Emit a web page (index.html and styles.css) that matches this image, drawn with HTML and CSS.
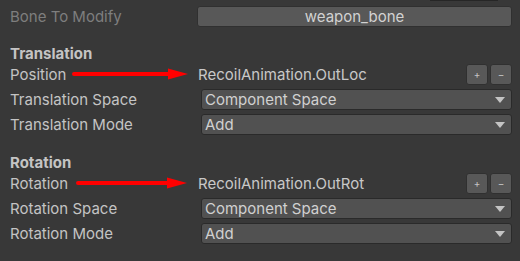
FILE: index.html
```html
<!DOCTYPE html>
<html>
<head>
<meta charset="utf-8">
<link rel="stylesheet" href="styles.css">
</head>
<body>
<div class="topnub"></div>
<div class="panel">
  <div class="row">
    <div class="label disabled">Bone To Modify</div>
    <div class="value"><div class="button-field">weapon_bone</div></div>
  </div>

  <div class="section">
    <div class="header">Translation</div>
    <div class="rows">
      <div class="row">
        <div class="label">Position
          <svg class="arrow arrow-pos" width="120" height="14" viewBox="0 0 120 14"><line x1="2" y1="7" x2="100" y2="7" stroke="#f00" stroke-width="4" stroke-linecap="round"/><polygon points="96,1.5 116,7 96,12.5" fill="#f00"/></svg>
        </div>
        <div class="value plain">
          <span class="ref">RecoilAnimation.OutLoc</span>
          <div class="btns"><div class="mini">+</div><div class="mini">&minus;</div></div>
        </div>
      </div>
      <div class="row">
        <div class="label">Translation Space</div>
        <div class="value"><div class="dropdown"><span>Component Space</span><i class="tri"></i></div></div>
      </div>
      <div class="row">
        <div class="label">Translation Mode</div>
        <div class="value"><div class="dropdown"><span>Add</span><i class="tri"></i></div></div>
      </div>
    </div>
  </div>

  <div class="section second">
    <div class="header">Rotation</div>
    <div class="rows">
      <div class="row">
        <div class="label">Rotation
          <svg class="arrow arrow-rot" width="120" height="14" viewBox="0 0 120 14"><line x1="2" y1="7" x2="96" y2="7" stroke="#f00" stroke-width="4" stroke-linecap="round"/><polygon points="91,1.5 111,7 91,12.5" fill="#f00"/></svg>
        </div>
        <div class="value plain">
          <span class="ref">RecoilAnimation.OutRot</span>
          <div class="btns"><div class="mini">+</div><div class="mini">&minus;</div></div>
        </div>
      </div>
      <div class="row">
        <div class="label">Rotation Space</div>
        <div class="value"><div class="dropdown"><span>Component Space</span><i class="tri"></i></div></div>
      </div>
      <div class="row">
        <div class="label">Rotation Mode</div>
        <div class="value"><div class="dropdown"><span>Add</span><i class="tri"></i></div></div>
      </div>
    </div>
  </div>
</div>
</body>
</html>
```
FILE: styles.css
```css
html, body {
  margin: 0;
  padding: 0;
  background: #383838;
}
body {
  width: 520px;
  height: 261px;
  overflow: hidden;
  position: relative;
  font-family: Inter, "Noto Sans", sans-serif;
  font-size: 15px;
  color: #c4c4c4;
}
.topnub {
  position: absolute;
  left: 430px;
  top: 0;
  width: 68px;
  height: 1px;
  background: #262626;
}
.panel {
  padding: 6px 8px 0 10px;
  display: flex;
  flex-direction: column;
}
.row {
  display: grid;
  grid-template-columns: 187px 1fr;
  height: 21px;
  align-items: center;
}
.label {
  position: relative;
  line-height: 21px;
  white-space: nowrap;
}
.label.disabled {
  color: #7e7e7e;
}
.value {
  height: 21px;
  display: flex;
  align-items: stretch;
}
.button-field {
  flex: 1;
  box-sizing: border-box;
  background: #585858;
  border: 1px solid #303030;
  border-radius: 3px;
  text-align: center;
  line-height: 19px;
  color: #d2d2d2;
}
.section {
  margin-top: 16px;
}
.section.second {
  margin-top: 17px;
}
.header {
  font-weight: 700;
  height: 21px;
  line-height: 21px;
  color: #c4c4c4;
}
.rows {
  display: flex;
  flex-direction: column;
  gap: 4px;
}
.value.plain {
  align-items: center;
  justify-content: space-between;
}
.ref {
  padding-left: 1px;
  color: #c8c8c8;
}
.btns {
  display: flex;
  gap: 2px;
  height: 21px;
}
.mini {
  width: 22px;
  height: 21px;
  box-sizing: border-box;
  background: #585858;
  border: 1px solid #303030;
  border-radius: 3px;
  font-size: 10px;
  line-height: 19px;
  text-align: center;
  color: #c4c4c4;
}
.dropdown {
  flex: 1;
  margin-left: 4px;
  box-sizing: border-box;
  background: #515151;
  border: 1px solid #2a2a2a;
  border-radius: 3px;
  display: flex;
  align-items: center;
  justify-content: space-between;
  padding: 0 6px 0 3px;
  line-height: 19px;
  color: #d0d0d0;
}
.tri {
  width: 0;
  height: 0;
  border-left: 5px solid transparent;
  border-right: 5px solid transparent;
  border-top: 6px solid #c4c4c4;
}
.arrow {
  position: absolute;
  top: 3px;
}
.arrow-pos {
  left: 62px;
}
.arrow-rot {
  left: 66px;
}
```
